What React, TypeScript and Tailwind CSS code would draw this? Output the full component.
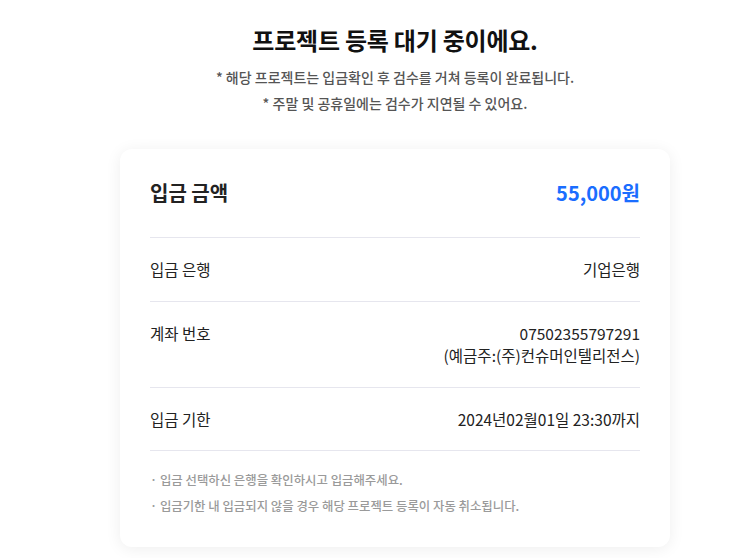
import React from "react";

interface Row {
  label: string;
  value: string[];
}

const rows: Row[] = [
  { label: "입금 은행", value: ["기업은행"] },
  { label: "계좌 번호", value: ["07502355797291", "(예금주:(주)컨슈머인텔리전스)"] },
  { label: "입금 기한", value: ["2024년02월01일 23:30까지"] },
];

const App: React.FC = () => {
  return (
    <div
      className="min-h-screen bg-white text-[#222]"
      style={{ fontFamily: '"Noto Sans CJK KR", "Noto Sans", sans-serif' }}
    >
      <div className="w-[550px] ml-[120px] pt-[24px]">
        {/* heading */}
        <h1 className="text-center text-[24px] font-bold leading-[32px] tracking-[-0.01em] text-[#111]">
          프로젝트 등록 대기 중이에요.
        </h1>
        <div className="mt-[8px] text-center text-[14px] font-medium leading-[26px] text-[#555]">
          <p>* 해당 프로젝트는 입금확인 후 검수를 거쳐 등록이 완료됩니다.</p>
          <p>* 주말 및 공휴일에는 검수가 지연될 수 있어요.</p>
        </div>

        {/* card */}
        <div className="mt-[33px] rounded-[12px] bg-white px-[30px] pt-[24px] pb-[28px] shadow-[0_2px_16px_rgba(0,0,0,0.07)]">
          <div className="flex h-[40px] items-center justify-between border-b border-[#e6e6ee] box-content pb-[24px]">
            <span className="text-[20px] font-bold">입금 금액</span>
            <span className="text-[20px] font-bold text-[#1a6dff]">55,000원</span>
          </div>

          {rows.map((row) => (
            <div
              key={row.label}
              className="flex justify-between border-b border-[#e6e6ee] py-[20px] text-[15.5px] leading-[22.5px]"
            >
              <span>{row.label}</span>
              <div className="text-right">
                {row.value.map((v) => (
                  <p key={v}>{v}</p>
                ))}
              </div>
            </div>
          ))}

          <div className="pt-[16px] text-[12.4px] font-medium leading-[26px] text-[#9a9a9a]">
            <p>· 입금 선택하신 은행을 확인하시고 입금해주세요.</p>
            <p>· 입금기한 내 입금되지 않을 경우 해당 프로젝트 등록이 자동 취소됩니다.</p>
          </div>
        </div>
      </div>
    </div>
  );
};

export default App;
